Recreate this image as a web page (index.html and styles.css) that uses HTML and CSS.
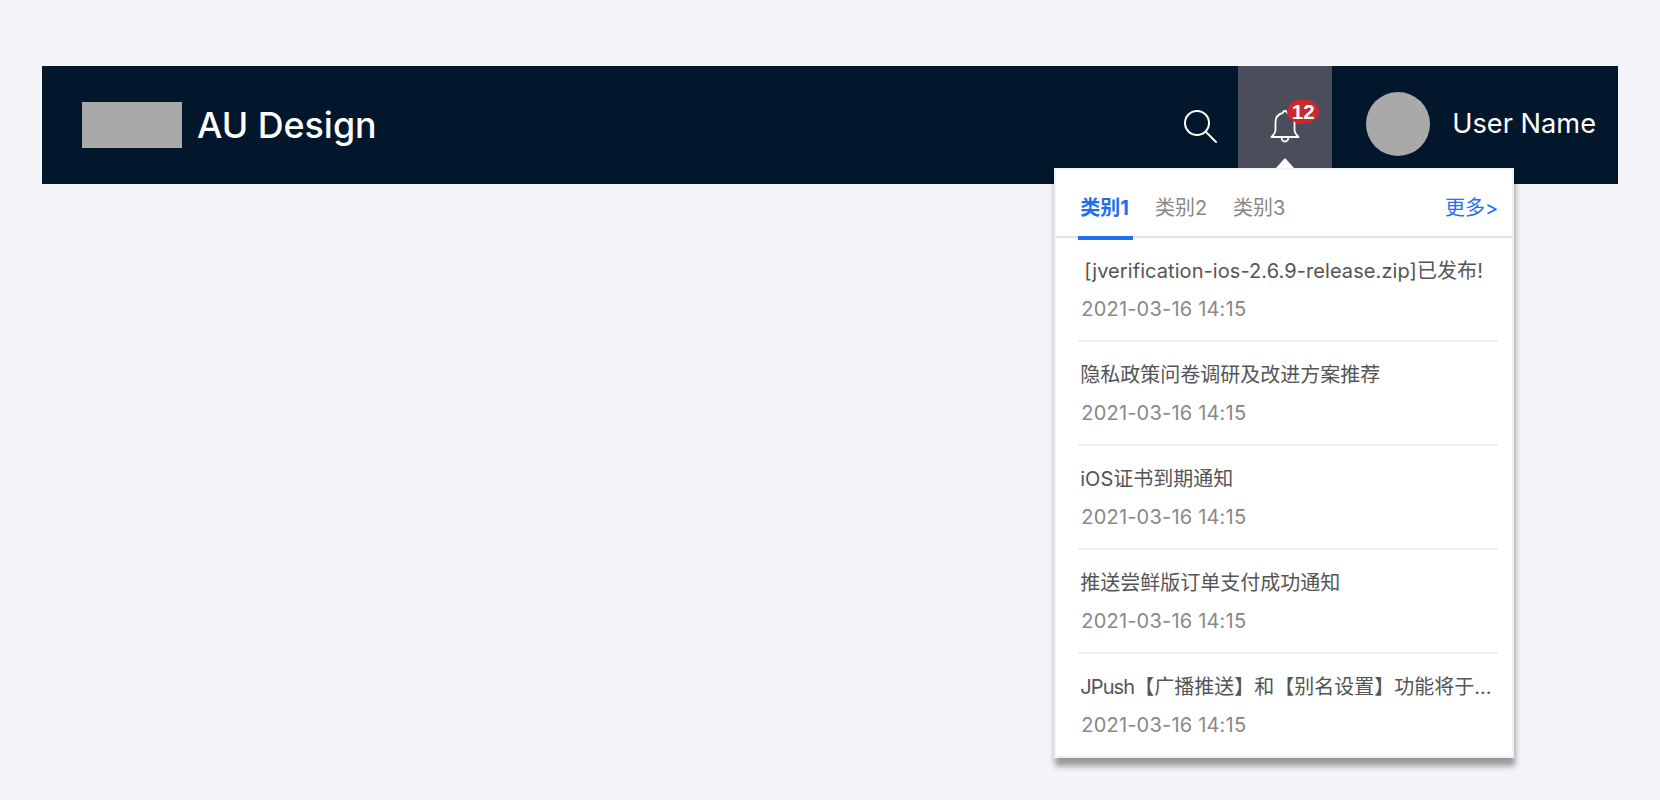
FILE: index.html
```html
<!DOCTYPE html>
<html lang="zh">
<head>
<meta charset="utf-8">
<title>AU Design</title>
<link rel="stylesheet" href="styles.css">
</head>
<body>
<header class="topbar">
  <div class="brand">
    <div class="logo"></div>
    <span class="brand-name">AU Design</span>
  </div>
  <div class="actions">
    <button class="search" aria-label="search">
      <svg width="34" height="34" viewBox="0 0 34 34" fill="none" stroke="#fff" stroke-width="2" stroke-linecap="round"><circle cx="13" cy="13" r="12"/><path d="M22 22L32 32"/></svg>
    </button>
    <div class="bell-cell">
      <svg class="bell" width="30" height="34" viewBox="0 0 30 34" fill="none" stroke="#fff" stroke-width="1.8" stroke-linejoin="round" stroke-linecap="round"><path d="M15 2c-1.2 0-2 .8-2 1.800C8 5 5.500 8.500 5.500 13v8c0 3-2 5-4 7h27c-2-2-4-4-4-7v-8c0-4.500-2.500-8-7.500-9.200C17 2.800 16.200 2 15 2z"/><path d="M11.500 28.500c.3 2.500 1.800 4 3.500 4s3.200-1.500 3.500-4"/></svg>
      <span class="badge">12</span>
      <section class="popup">
        <span class="popup-arrow"></span>
        <nav class="tabs">
          <a class="tab active">类别1</a>
          <a class="tab">类别2</a>
          <a class="tab">类别3</a>
          <a class="more">更多&gt;</a>
        </nav>
        <ul class="list">
          <li class="item"><p class="item-title first">[jverification-ios-2.6.9-release.zip]已发布!</p><p class="item-date">2021-03-16 14:15</p></li>
          <li class="item"><p class="item-title">隐私政策问卷调研及改进方案推荐</p><p class="item-date">2021-03-16 14:15</p></li>
          <li class="item"><p class="item-title">iOS证书到期通知</p><p class="item-date">2021-03-16 14:15</p></li>
          <li class="item"><p class="item-title">推送尝鲜版订单支付成功通知</p><p class="item-date">2021-03-16 14:15</p></li>
          <li class="item"><p class="item-title"><span class="latin-tight">JPush</span>【广播推送】和【别名设置】功能将于...</p><p class="item-date">2021-03-16 14:15</p></li>
        </ul>
      </section>
    </div>
    <div class="user">
      <div class="avatar"></div>
      <span class="user-name">User Name</span>
    </div>
  </div>
</header>
</body>
</html>
```
FILE: styles.css
```css
* { box-sizing: border-box; }
html, body { height: 100%; }
body {
  margin: 0;
  padding: 66px 42px 0;
  background: #f4f4f9;
  font-family: "Inter", "Noto Sans CJK SC", sans-serif;
  overflow: hidden;
}
.topbar {
  height: 118px;
  background: #02162c;
  display: flex;
  align-items: center;
  justify-content: space-between;
  padding: 0 22px 0 40px;
  color: #fff;
}
.brand { display: flex; align-items: center; gap: 15px; }
.logo { width: 100px; height: 46px; background: #a9a9a9; }
.brand-name { font-size: 35.8px; font-weight: 500; line-height: 46px; }
.actions { display: flex; align-items: center; height: 100%; }
.search {
  background: none;
  border: 0;
  padding: 0;
  margin: 4px 20px 0 0;
  display: flex;
  height: 34px;
}
.bell-cell {
  position: relative;
  width: 94px;
  align-self: flex-start;
  height: 102px;
  background: #4a4e5b;
  display: flex;
  justify-content: center;
  padding-top: 43px;
}
.bell { display: block; }
.badge {
  position: absolute;
  left: 49px;
  top: 33px;
  width: 32px;
  height: 25px;
  border-radius: 50%;
  background: #c9282d;
  color: #fff;
  font: 700 20.5px/25px "Liberation Sans", sans-serif;
  text-align: center;
}
.user { display: flex; align-items: center; gap: 22px; margin-left: 34px; }
.avatar { width: 64px; height: 64px; border-radius: 50%; background: #a9a9a9; margin-top: -2px; }
.user-name { font-size: 27.2px; line-height: 36px; font-weight: 400; margin-top: -2px; }
.popup {
  position: absolute;
  left: -184px;
  top: 102px;
  width: 460px;
  height: 590px;
  background: #fff;
  color: #555;
  border: 2px solid #f1f1f3;
  box-shadow: 1px 8px 6px rgba(0, 0, 0, .38);
  padding: 0 14px;
  z-index: 2;
}
.popup-arrow {
  position: absolute;
  left: 220px;
  top: -12px;
  width: 0;
  height: 0;
  border-left: 9px solid transparent;
  border-right: 9px solid transparent;
  border-bottom: 10px solid #fff;
}
.tabs {
  display: flex;
  align-items: flex-start;
  height: 68px;
  margin: 0 -14px;
  padding: 0 14px 0 22px;
  border-bottom: 2px solid #e3e3e6;
  font-size: 20px;
  line-height: 28px;
}
.tab {
  height: 70px;
  padding: 24px 2px 0;
  margin-right: 22px;
  color: #888;
  border-bottom: 4px solid transparent;
}
.tab.active {
  color: #1f6ff2;
  font-weight: 700;
  border-bottom-color: #1f6ff2;
  padding-right: 4px;
  margin-right: 20px;
}
.more { margin-left: auto; padding-top: 24px; color: #1f6ff2; }
.list { list-style: none; margin: 0; padding: 0 0 0 8px; }
.item { height: 104px; padding-top: 18px; border-bottom: 2px solid #f0f0f2; }
.item:last-child { border-bottom: 0; }
.item p { margin: 0; }
.item-title {
  font-size: 20px;
  line-height: 30px;
  white-space: nowrap;
  overflow: hidden;
  text-overflow: ellipsis;
  padding-left: 2px;
}
.item-title.first { padding-left: 6px; letter-spacing: .08px; }
.latin-tight { letter-spacing: -.9px; }
.item-date { font-size: 20px; letter-spacing: .2px; line-height: 28px; color: #888; margin-top: 9px !important; padding-left: 3px; }
```
